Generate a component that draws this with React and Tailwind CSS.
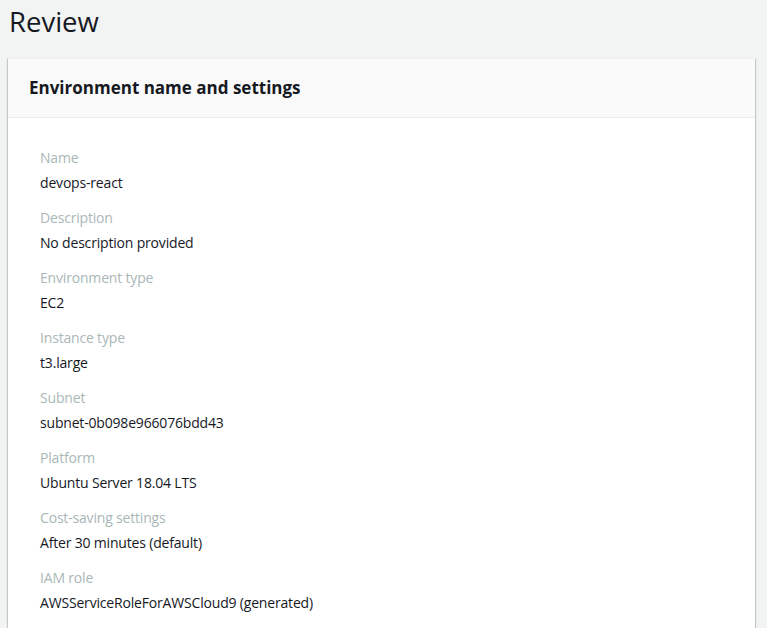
import React from "react";

const rows = [
  ["Name", "devops-react"],
  ["Description", "No description provided"],
  ["Environment type", "EC2"],
  ["Instance type", "t3.large"],
  ["Subnet", "subnet-0b098e966076bdd43"],
  ["Platform", "Ubuntu Server 18.04 LTS"],
  ["Cost-saving settings", "After 30 minutes (default)"],
  ["IAM role", "AWSServiceRoleForAWSCloud9 (generated)"],
];

export default function App() {
  return (
    <div
      className="min-h-[628px] w-[767px] bg-[#f2f3f3] pl-2 pr-3 overflow-hidden"
      style={{ fontFamily: '"Open Sans", "Noto Sans", Arial, sans-serif' }}
    >
      <h1 className="pl-[1px] pt-[3px] text-[27.5px] leading-[38px] text-[#16191f] font-normal">
        Review
      </h1>
      <div className="mt-[17px] bg-white border-t border-[#eaeded] shadow-[0_1px_1px_0_rgba(0,28,36,0.3),1px_1px_1px_0_rgba(0,28,36,0.15),-1px_1px_1px_0_rgba(0,28,36,0.15)]">
        <div className="h-[59px] bg-[#fafafa] border-b border-[#eaeded] px-[21px] flex items-center">
          <h2 className="text-[17px] font-bold text-[#16191f] leading-[22px]">
            Environment name and settings
          </h2>
        </div>
        <div className="pl-[32px] pt-[30px] pb-[20px]">
          {rows.map(([label, value]) => (
            <div key={label} className="mb-[15px]">
              <div className="text-[14px] leading-[20px] tracking-[-0.18px] text-[#aab7b8]">{label}</div>
              <div className="mt-[5px] text-[14px] leading-[20px] tracking-[-0.18px] text-[#16191f]">{value}</div>
            </div>
          ))}
        </div>
      </div>
    </div>
  );
}
